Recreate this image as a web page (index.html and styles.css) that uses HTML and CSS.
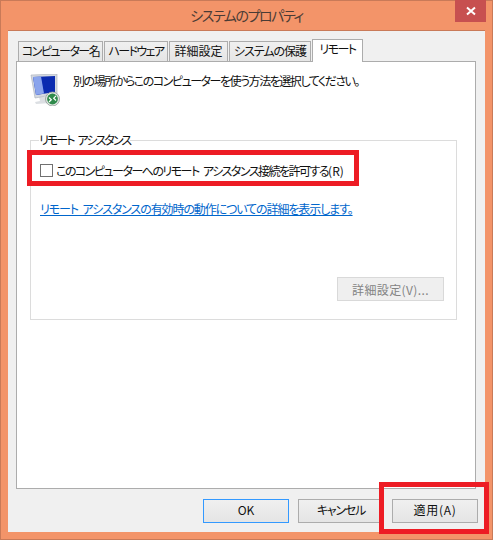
FILE: index.html
```html
<!DOCTYPE html>
<html lang="ja">
<head>
  <meta charset="UTF-8" />
  <title>システムのプロパティ</title>
  <link rel="stylesheet" href="styles.css">
</head>
<body>
  <div class="window">
    <div class="titlebar">
      <span class="title">システムのプロパティ</span>
      <div class="close">
        <svg width="10" height="10" viewBox="0 0 10 10"><path d="M1 1.5 L9 8.5 M9 1.5 L1 8.5" stroke="#fff" stroke-width="2"/></svg>
      </div>
    </div>

    <div class="client">
      <ul class="tabs">
        <li class="tab tab-name">コンピューター名</li>
        <li class="tab tab-hw">ハードウェア</li>
        <li class="tab tab-adv">詳細設定</li>
        <li class="tab tab-prot">システムの保護</li>
        <li class="tab tab-active">リモート</li>
      </ul>

      <div class="panel">
        <div class="intro">
          <svg class="intro-icon" width="32" height="32" viewBox="0 0 32 32">
            <path d="M9 23 L19 23 L21 29 L6 30 L5 28 L10 27 Z" fill="#dcdfe3"/>
            <path d="M1 1 L27 0 L27 20 L5 24 Z" fill="#d5d9df" stroke="#a6adb8" stroke-width="0.6"/>
            <path d="M3 3 L25 2 L25 18 L6 21 Z" fill="#0b2bb0"/>
            <path d="M3 3 L11 2.6 L14 19.6 L6 21 Z" fill="#8aa4ec"/>
            <circle cx="22.5" cy="25" r="7" fill="#e2e7e4" stroke="#8e9a96" stroke-width="0.8"/>
            <circle cx="22.5" cy="25" r="5.4" fill="#2f8a4b"/>
            <path d="M19 23.5 L21.3 25.8 L19 28 M26 21.8 L23.7 24.2 L26 26.5" stroke="#fff" stroke-width="1.2" fill="none"/>
          </svg>
          <p class="intro-text">別の場所からこのコンピューターを使う方法を選択してください。</p>
        </div>

        <fieldset class="group">
          <legend>リモート アシスタンス</legend>
          <label class="check-row">
            <span class="checkbox"></span>
            <span class="check-text">このコンピューターへのリモート アシスタンス接続を許可する<span class="accel">(R)</span></span>
          </label>
          <a class="link" href="#">リモート アシスタンスの有効時の動作についての詳細を表示します。</a>
          <div class="group-actions">
            <button class="btn btn-disabled" disabled>詳細設定(V)...</button>
          </div>
          <div class="mark mark-check"></div>
        </fieldset>
      </div>

      <div class="buttons">
        <button class="btn btn-default">OK</button>
        <button class="btn btn-cancel">キャンセル</button>
        <button class="btn btn-apply">適用(A)</button>
      </div>
    </div>

    <div class="mark mark-apply"></div>
  </div>
</body>
</html>
```

FILE: styles.css
```css
* {
  margin: 0;
  padding: 0;
  box-sizing: border-box;
}

body {
  width: 493px;
  height: 540px;
  overflow: hidden;
  font-family: "Noto Sans CJK JP", "Noto Sans", sans-serif;
  font-size: 12px;
  font-feature-settings: "palt";
  color: #111;
}

.window {
  position: relative;
  display: flex;
  flex-direction: column;
  width: 493px;
  height: 540px;
  padding: 0 7px 7px 7px;
  background: #f39469;
  border: 1px solid #c97a58;
}

.titlebar {
  position: relative;
  flex: none;
  height: 29px;
  text-align: center;
  line-height: 28px;
}

.title {
  font-size: 14px;
  letter-spacing: -1.4px;
  color: #4a3b35;
}

.close {
  position: absolute;
  top: -1px;
  right: -1px;
  display: flex;
  align-items: center;
  justify-content: center;
  width: 31px;
  height: 22px;
  background: #c75050;
}

.client {
  flex: 1;
  padding: 8px 9px 0 8px;
  background: #f0f0f0;
  border-top: 1px solid #c97a58;
}

.tabs {
  display: flex;
  align-items: flex-end;
  height: 22px;
  padding-left: 2px;
  list-style: none;
}

.tab {
  height: 20px;
  margin-right: 1px;
  text-align: center;
  line-height: 18px;
  white-space: nowrap;
  background: linear-gradient(to bottom, #f0f0f0, #e5e5e5);
  border: 1px solid #acacac;
  border-bottom: 0;
}

.tab-name { width: 85px; letter-spacing: -1.5px; }
.tab-hw { width: 64px; letter-spacing: -1.6px; }
.tab-adv { width: 59px; }
.tab-prot { width: 82px; letter-spacing: -1px; }

.tab-active {
  position: relative;
  z-index: 1;
  width: 51px;
  height: 23px;
  margin: 0 0 -1px 0;
  letter-spacing: -1.5px;
  background: #fff;
}

.panel {
  height: 428px;
  padding: 13px 18px 0 13px;
  background: #fff;
  border: 1px solid #acacac;
}

.intro {
  display: flex;
  align-items: flex-start;
  gap: 11px;
  height: 58px;
}

.intro-icon {
  flex: none;
  margin-top: -1px;
}

.intro-text {
  margin-top: -3px;
  line-height: 18px;
  letter-spacing: -1.47px;
}

.group {
  position: relative;
  height: 187px;
  padding: 15px 12px 0 9px;
  border: 1px solid #dcdcdc;
}

.group legend {
  margin-left: -1px;
  padding: 0;
  line-height: 14px;
  letter-spacing: -1.9px;
  word-spacing: 3px;
}

.check-row {
  display: flex;
  align-items: center;
  gap: 3px;
  height: 16px;
}

.check-text {
  letter-spacing: -1.52px;
  word-spacing: 3px;
}

.accel {
  letter-spacing: 0;
}

.checkbox {
  flex: none;
  width: 13px;
  height: 13px;
  background: #fff;
  border: 1px solid #707070;
}

.link {
  display: block;
  margin-top: 23px;
  line-height: 16px;
  letter-spacing: -1.1px;
  word-spacing: 3px;
  color: #0066cc;
  text-decoration: underline;
}

.group-actions {
  display: flex;
  justify-content: flex-end;
  margin-top: 60px;
}

.btn {
  width: 86px;
  height: 24px;
  font: inherit;
  color: #111;
  background: linear-gradient(to bottom, #f0f0f0, #e5e5e5);
  border: 1px solid #acacac;
}

.btn-default {
  border-color: #3399ff;
}

.btn-cancel {
  letter-spacing: -1.2px;
}

.btn-apply {
  margin-left: -1px;
  letter-spacing: 0.7px;
}

.btn-disabled {
  width: 107px;
  letter-spacing: 0.4px;
  color: #838383;
  background: #efefef;
  border-color: #d9d9d9;
}

.buttons {
  display: flex;
  justify-content: flex-end;
  gap: 9px;
  margin-top: 10px;
  margin-right: -2px;
}

.buttons .btn {
  padding-bottom: 3px;
}

/* red annotation frames over the dialog */
.mark {
  position: absolute;
  border: 5px solid #ed1c24;
  pointer-events: none;
}

.mark-check {
  top: 3px;
  left: -4px;
  width: 332px;
  height: 36px;
}

.mark-apply {
  top: 481px;
  left: 378px;
  width: 110px;
  height: 52px;
}
```
